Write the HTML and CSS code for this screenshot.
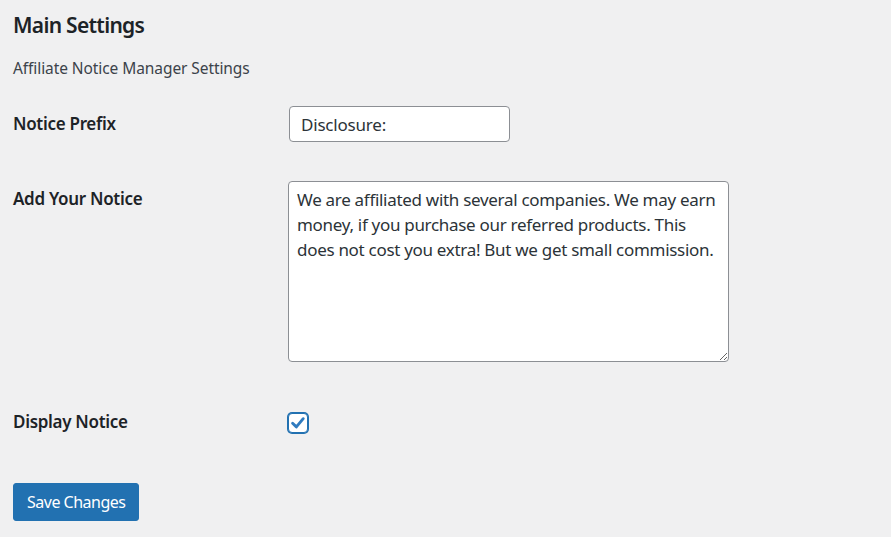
FILE: index.html
```html
<!DOCTYPE html>
<html lang="en">
<head>
<meta charset="utf-8">
<title>Main Settings</title>
<link rel="stylesheet" href="styles.css">
</head>
<body>
<div class="wrap">
  <h2 class="title">Main Settings</h2>
  <p class="desc">Affiliate Notice Manager Settings</p>
  <form class="form-table">
    <div class="row row-prefix">
      <label class="th" for="prefix">Notice Prefix</label>
      <div class="td"><input id="prefix" class="text-input" type="text" value="Disclosure:"></div>
    </div>
    <div class="row row-notice">
      <label class="th" for="notice">Add Your Notice</label>
      <div class="td"><textarea id="notice" class="textarea">We are affiliated with several companies. We may earn money, if you purchase our referred products. This does not cost you extra! But we get small commission.</textarea></div>
    </div>
    <div class="row row-display">
      <span class="th">Display Notice</span>
      <div class="td">
        <span class="checkbox">
          <svg viewBox="0 0 20 20" width="18" height="18" aria-hidden="true"><path d="M4 10.2 L8.2 14.3 L15.8 5.2" fill="none" stroke="#2f7bbf" stroke-width="3.2" stroke-linecap="round" stroke-linejoin="round"/></svg>
        </span>
      </div>
    </div>
    <div class="submit">
      <button type="button" class="button-primary">Save Changes</button>
    </div>
  </form>
</div>
</body>
</html>
```

FILE: styles.css
```css
html, body {
  margin: 0;
  padding: 0;
  background: #f0f0f1;
}
body {
  font-family: "Noto Sans", "Open Sans", sans-serif;
  color: #1d2327;
}
.wrap {
  padding: 0 13px;
}
.title {
  margin: 12px 0 0;
  font-size: 21px;
  line-height: 26px;
  font-weight: 600;
  letter-spacing: -0.7px;
}
.desc {
  margin: 20px 0 0;
  font-size: 15.5px;
  line-height: 20px;
  color: #3c434a;
  letter-spacing: -0.08px;
}
.form-table {
  display: flex;
  flex-direction: column;
}
.row {
  display: grid;
  grid-template-columns: 275px 1fr;
  align-items: start;
}
.th {
  padding-top: 6px;
  font-size: 17px;
  line-height: 23px;
  font-weight: 600;
  letter-spacing: -0.3px;
  color: #1d2327;
}
.row-prefix { margin-top: 28px; }
.row-notice { margin-top: 39px; }
.row-display { margin-top: 45px; }
.row-display .th { padding-top: 3px; }
.text-input {
  box-sizing: border-box;
  display: block;
  width: 221px;
  height: 36px;
  margin: 0 0 0 1px;
  padding: 0 11px;
  border: 1px solid #8c8f94;
  border-radius: 4px;
  background: #fff;
  font-family: inherit;
  font-size: 17px;
  letter-spacing: -0.2px;
  color: #2c3338;
  outline: none;
}
.textarea {
  box-sizing: border-box;
  display: block;
  width: 441px;
  height: 181px;
  margin: 0;
  padding: 5px 8px;
  border: 1px solid #8c8f94;
  border-radius: 4px;
  background: #fff;
  font-family: inherit;
  font-size: 17px;
  line-height: 25px;
  letter-spacing: -0.3px;
  color: #2c3338;
  outline: none;
  resize: both;
}
.checkbox {
  box-sizing: border-box;
  display: flex;
  align-items: center;
  justify-content: center;
  width: 20px;
  height: 20px;
  margin: 6px 0 0 0;
  border: 1px solid #2271b1;
  border-radius: 4px;
  box-shadow: 0 0 0 1px #2271b1;
  background: #fff;
}
.submit {
  margin-top: 50px;
}
.button-primary {
  box-sizing: border-box;
  height: 38px;
  padding: 0 13px;
  border: 1px solid #2271b1;
  border-radius: 3px;
  background: #2271b1;
  color: #fff;
  font-family: inherit;
  font-size: 16px;
  letter-spacing: -0.5px;
  cursor: pointer;
}
```
